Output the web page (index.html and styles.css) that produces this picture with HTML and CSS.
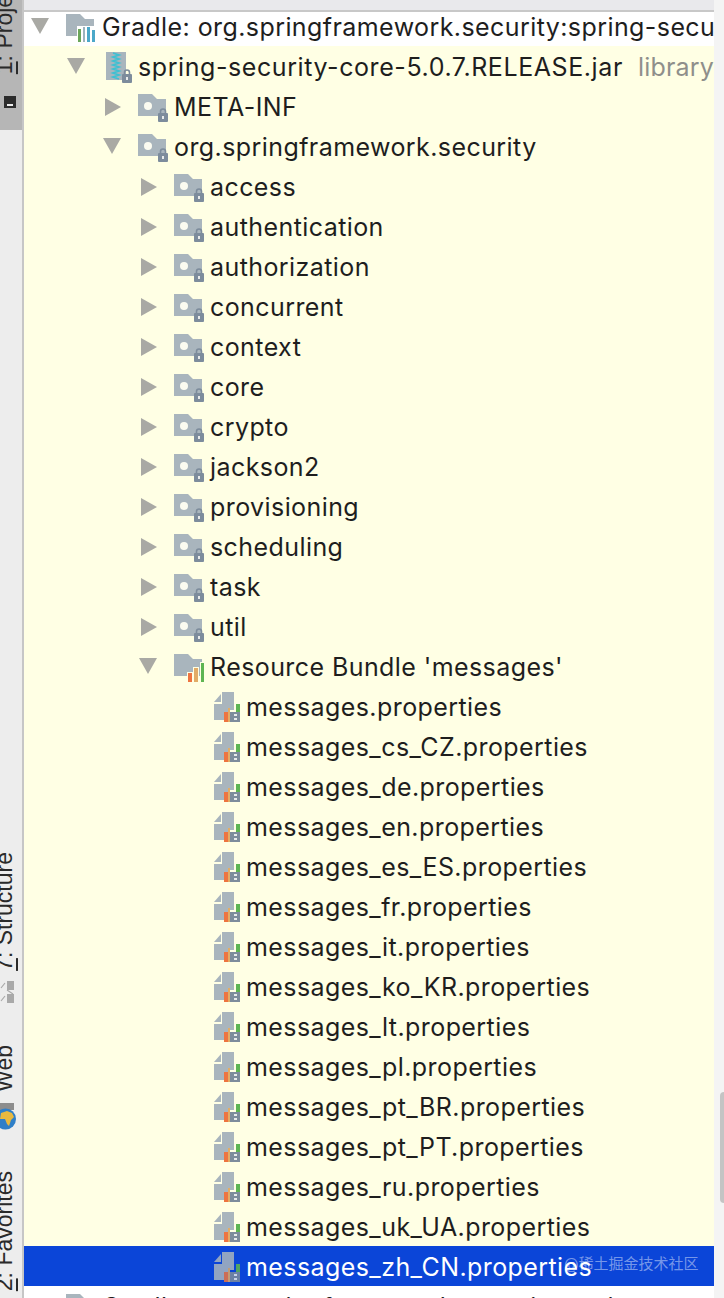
FILE: index.html
```html
<!DOCTYPE html>
<html lang="en">
<head>
	<meta charset="UTF-8">
	<title>Project tree</title>
	<link rel="stylesheet" href="styles.css">
</head>
<body>
	<svg class="defs" width="0" height="0">
		<symbol id="lock" viewBox="0 0 12 15">
			<path d="M3.5 7V4.5a2.5 2.5 0 0 1 5 0V7" fill="none" stroke="#7d8c9c" stroke-width="1.6"/>
			<rect x="1" y="6" width="10" height="9" rx="1" fill="#7d8c9c"/>
			<rect x="5" y="9" width="2" height="3" fill="#e8eaea"/>
		</symbol>
		<symbol id="folder-lock" viewBox="0 0 31 30">
			<path d="M0 2H14L19 7H28V24H0Z" fill="#a9b5bd"/>
			<circle cx="10" cy="14" r="4" fill="#fbfbf0"/>
			<use href="#lock" x="19" y="15" width="12" height="15"/>
		</symbol>
		<symbol id="folder-gradle" viewBox="0 0 31 30">
			<path d="M0 2H14L19 7H28V24H0Z" fill="#a9b5bd"/>
			<rect x="11" y="14" width="20" height="16" fill="#fff"/>
			<rect x="12" y="17" width="3" height="13" fill="#6ba65a"/>
			<rect x="17" y="15" width="2" height="15" fill="#9db2bd"/>
			<rect x="21" y="15" width="3" height="15" fill="#4ba8c9"/>
			<rect x="26" y="18" width="3" height="12" fill="#4ba8c9"/>
		</symbol>
		<symbol id="jar" viewBox="0 0 28 32">
			<rect x="0" y="1" width="20" height="28" fill="#a9b5bd"/>
			<path d="M7 2L13 4L7 6L13 8L7 10L13 12L7 14L13 16L7 18L13 20L7 22L13 24L7 26L13 28" fill="none" stroke="#3fc0d2" stroke-width="1.8"/>
			<use href="#lock" x="15" y="17" width="12" height="15"/>
		</symbol>
		<symbol id="folder-bundle" viewBox="0 0 31 30">
			<path d="M0 2H14L19 7H28V24H0Z" fill="#a9b5bd"/>
			<g stroke="#ffffe4" stroke-width="2" paint-order="stroke">
				<rect x="14" y="21" width="4" height="10" fill="#ee7440"/>
				<rect x="20" y="16" width="4" height="15" fill="#e2ac66"/>
				<rect x="27" y="11" width="3" height="20" fill="#5eb552"/>
			</g>
		</symbol>
		<symbol id="file-bundle" viewBox="0 0 28 32">
			<path d="M0 11L7 3V11Z" fill="#a9b5bd"/>
			<path d="M8 1H20V19H14V29H0V13H8Z" fill="#a9b5bd"/>
			<rect x="10" y="21" width="4" height="10" fill="#ee7440"/>
			<rect x="14" y="17" width="2" height="14" fill="#e2ac66"/>
			<rect x="22" y="13" width="4" height="10" fill="#5eb552"/>
			<rect x="16" y="21" width="10" height="10" fill="#7d8c9c"/>
			<rect x="20" y="23" width="3" height="2" fill="#e8eaea"/>
			<rect x="20" y="27" width="3" height="2" fill="#e8eaea"/>
		</symbol>
	</svg>

	<div class="sidebar">
		<div class="tab tab-active">
			<div class="tab-label"><u>1</u>: Project</div>
			<div class="tab-icon-project"><span></span></div>
		</div>
		<div class="tab-label tab-structure"><u>7</u>: Structure</div>
		<svg class="tab-icon-structure" width="16" height="22" viewBox="0 0 16 22">
			<rect x="7" y="0" width="7" height="9" fill="#a9a9a9"/>
			<rect x="7" y="13" width="7" height="9" fill="#a9a9a9"/>
			<path d="M1 7L5 2M1 20L5 15M7 9L13 13" stroke="#a9a9a9" stroke-width="1.2" fill="none"/>
		</svg>
		<div class="tab-label tab-web">Web</div>
		<svg class="tab-icon-globe" width="17" height="27" viewBox="0 0 17 27">
			<rect x="0" y="0" width="14" height="7" fill="#8d8d8d"/>
			<circle cx="5.5" cy="16" r="10.5" fill="#2f7fc8"/>
			<path d="M1 10L7 8L12 10L14 14L11 17L9 23L7 21L5 16L0 16Z" fill="#e9b93f"/>
		</svg>
		<div class="tab-label tab-favorites"><u>2</u>: Favorites</div>
		<div class="star">&#9733;</div>
	</div>

	<div class="main">
		<div class="topbar"></div>
		<div class="tree">
			<div class="row root first d0"><i class="arrow down"></i><svg class="ico"><use href="#folder-gradle"/></svg><span>Gradle: org.springframework.security:spring-security-core:5.0.7.RELEASE</span></div>
			<div class="row d1"><i class="arrow down"></i><svg class="ico ico-jar"><use href="#jar"/></svg><span>spring-security-core-5.0.7.RELEASE.jar</span><em>library root</em></div>
			<div class="row d2"><i class="arrow right"></i><svg class="ico"><use href="#folder-lock"/></svg><span>META-INF</span></div>
			<div class="row d2"><i class="arrow down"></i><svg class="ico"><use href="#folder-lock"/></svg><span>org.springframework.security</span></div>
			<div class="row d3"><i class="arrow right"></i><svg class="ico"><use href="#folder-lock"/></svg><span>access</span></div>
			<div class="row d3"><i class="arrow right"></i><svg class="ico"><use href="#folder-lock"/></svg><span>authentication</span></div>
			<div class="row d3"><i class="arrow right"></i><svg class="ico"><use href="#folder-lock"/></svg><span>authorization</span></div>
			<div class="row d3"><i class="arrow right"></i><svg class="ico"><use href="#folder-lock"/></svg><span>concurrent</span></div>
			<div class="row d3"><i class="arrow right"></i><svg class="ico"><use href="#folder-lock"/></svg><span>context</span></div>
			<div class="row d3"><i class="arrow right"></i><svg class="ico"><use href="#folder-lock"/></svg><span>core</span></div>
			<div class="row d3"><i class="arrow right"></i><svg class="ico"><use href="#folder-lock"/></svg><span>crypto</span></div>
			<div class="row d3"><i class="arrow right"></i><svg class="ico"><use href="#folder-lock"/></svg><span>jackson2</span></div>
			<div class="row d3"><i class="arrow right"></i><svg class="ico"><use href="#folder-lock"/></svg><span>provisioning</span></div>
			<div class="row d3"><i class="arrow right"></i><svg class="ico"><use href="#folder-lock"/></svg><span>scheduling</span></div>
			<div class="row d3"><i class="arrow right"></i><svg class="ico"><use href="#folder-lock"/></svg><span>task</span></div>
			<div class="row d3"><i class="arrow right"></i><svg class="ico"><use href="#folder-lock"/></svg><span>util</span></div>
			<div class="row d3"><i class="arrow down"></i><svg class="ico"><use href="#folder-bundle"/></svg><span>Resource Bundle 'messages'</span></div>
			<div class="row d4"><i class="arrow"></i><svg class="ico ico-file"><use href="#file-bundle"/></svg><span>messages.properties</span></div>
			<div class="row d4"><i class="arrow"></i><svg class="ico ico-file"><use href="#file-bundle"/></svg><span>messages_cs_CZ.properties</span></div>
			<div class="row d4"><i class="arrow"></i><svg class="ico ico-file"><use href="#file-bundle"/></svg><span>messages_de.properties</span></div>
			<div class="row d4"><i class="arrow"></i><svg class="ico ico-file"><use href="#file-bundle"/></svg><span>messages_en.properties</span></div>
			<div class="row d4"><i class="arrow"></i><svg class="ico ico-file"><use href="#file-bundle"/></svg><span>messages_es_ES.properties</span></div>
			<div class="row d4"><i class="arrow"></i><svg class="ico ico-file"><use href="#file-bundle"/></svg><span>messages_fr.properties</span></div>
			<div class="row d4"><i class="arrow"></i><svg class="ico ico-file"><use href="#file-bundle"/></svg><span>messages_it.properties</span></div>
			<div class="row d4"><i class="arrow"></i><svg class="ico ico-file"><use href="#file-bundle"/></svg><span>messages_ko_KR.properties</span></div>
			<div class="row d4"><i class="arrow"></i><svg class="ico ico-file"><use href="#file-bundle"/></svg><span>messages_lt.properties</span></div>
			<div class="row d4"><i class="arrow"></i><svg class="ico ico-file"><use href="#file-bundle"/></svg><span>messages_pl.properties</span></div>
			<div class="row d4"><i class="arrow"></i><svg class="ico ico-file"><use href="#file-bundle"/></svg><span>messages_pt_BR.properties</span></div>
			<div class="row d4"><i class="arrow"></i><svg class="ico ico-file"><use href="#file-bundle"/></svg><span>messages_pt_PT.properties</span></div>
			<div class="row d4"><i class="arrow"></i><svg class="ico ico-file"><use href="#file-bundle"/></svg><span>messages_ru.properties</span></div>
			<div class="row d4"><i class="arrow"></i><svg class="ico ico-file"><use href="#file-bundle"/></svg><span>messages_uk_UA.properties</span></div>
			<div class="row d4 selected"><i class="arrow"></i><svg class="ico ico-file"><use href="#file-bundle"/></svg><span>messages_zh_CN.properties</span><div class="watermark">@稀土掘金技术社区</div></div>
			<div class="row root d0"><i class="arrow"></i><svg class="ico"><use href="#folder-gradle"/></svg><span>Gradle: org.springframework.security:spring-security-web</span></div>
		</div>
	</div>

	<div class="gutter">
		<div class="thumb"></div>
	</div>
</body>
</html>
```

FILE: styles.css
```css
* {
	box-sizing: border-box;
}

html, body {
	height: 100%;
}

body {
	display: flex;
	margin: 0;
	height: 1298px;
	overflow: hidden;
	background: #f4f4f4;
	color: #1e1e1e;
	font-family: Inter, "Noto Sans CJK SC", sans-serif;
}

.defs {
	position: absolute;
}

/********** left tool strip **********/
.sidebar {
	display: flex;
	flex-direction: column;
	flex: 0 0 24px;
	height: 1298px;
	overflow: hidden;
	background: #ededed;
	border-right: 2px solid #c6c6c6;
}

.tab {
	display: flex;
	flex-direction: column;
	justify-content: flex-end;
	flex: 0 0 130px;
	overflow: hidden;
	padding-bottom: 22px;
}

.tab-active {
	background: #b6b6b6;
}

.tab-label {
	flex: none;
	width: 22px;
	margin-left: -7px;
	writing-mode: vertical-rl;
	transform: rotate(180deg);
	font-family: "Liberation Sans", sans-serif;
	font-size: 23px;
	line-height: 22px;
	white-space: nowrap;
	color: #2a2a2a;
}

.tab-icon-project {
	flex: none;
	width: 12px;
	height: 12px;
	margin: 22px 0 0 4px;
	background: #2c2c2c;
}

.tab-icon-project span {
	display: block;
	width: 6px;
	height: 2px;
	margin: 8px 0 0 3px;
	background: #eee;
}

.tab-structure {
	margin-top: 722px;
}

.tab-icon-structure {
	flex: none;
	margin-top: 10px;
}

.tab-web {
	margin-top: 42px;
}

.tab-icon-globe {
	flex: none;
	margin-top: 11px;
}

.tab-favorites {
	margin-top: 41px;
}

.star {
	margin-top: 7px;
	font-size: 11px;
	line-height: 10px;
	color: #e0a840;
}

/********** tree **********/
.main {
	display: flex;
	flex-direction: column;
	flex: 0 0 690px;
	min-width: 0;
	overflow: hidden;
}

.topbar {
	flex: 0 0 12px;
	background: #e9e9ec;
	border-bottom: 2px solid #c8c8c8;
}

.tree {
	background: #ffffe4;
}

.row {
	display: flex;
	align-items: center;
	height: 40px;
	padding-top: 2px;
	font-size: 25px;
	letter-spacing: 0.42px;
	white-space: nowrap;
}

.row.root {
	background: #fff;
}

.row.first {
	height: 34px;
	padding-top: 0;
	padding-bottom: 4px;
}

.d0 { padding-left: 6px; }
.d1 { padding-left: 42px; }
.d2 { padding-left: 78px; }
.d3 { padding-left: 114px; }
.d4 { padding-left: 150px; }

.arrow {
	display: block;
	flex: 0 0 36px;
	width: 36px;
	height: 18px;
}

.arrow.down::before {
	content: "";
	display: block;
	width: 0;
	height: 0;
	margin-left: 1px;
	border-left: 9px solid transparent;
	border-right: 9px solid transparent;
	border-top: 16px solid #a9a9a4;
}

.arrow.right::before {
	content: "";
	display: block;
	width: 0;
	height: 0;
	margin-left: 3px;
	border-top: 9px solid transparent;
	border-bottom: 9px solid transparent;
	border-left: 16px solid #a9a9a4;
}

.ico {
	flex: 0 0 31px;
	width: 31px;
	height: 30px;
	margin-right: 5px;
}

.ico-jar {
	flex-basis: 28px;
	width: 28px;
	height: 32px;
	margin-left: 4px;
	margin-right: 4px;
}

.ico-jar + span {
	letter-spacing: 0.58px;
}

.ico-file {
	flex-basis: 28px;
	width: 28px;
	height: 32px;
	margin-left: 4px;
	margin-right: 4px;
}

.row em {
	margin-left: 15px;
	font-style: normal;
	letter-spacing: 0.2px;
	color: #8f8f8b;
}

.selected {
	position: relative;
	background: #0b45d8;
	color: #fff;
}

.selected .ico {
	opacity: 0.85;
}

.watermark {
	position: absolute;
	left: 540px;
	top: 9px;
	font-size: 15px;
	line-height: 18px;
	letter-spacing: 0;
	color: rgba(255, 255, 255, 0.45);
}

/********** right gutter **********/
.gutter {
	flex: 0 0 10px;
	padding-top: 1092px;
}

.thumb {
	width: 4px;
	height: 111px;
	margin-left: 6px;
	background: #c4c4c4;
	border-radius: 4px 0 0 4px;
}
```
